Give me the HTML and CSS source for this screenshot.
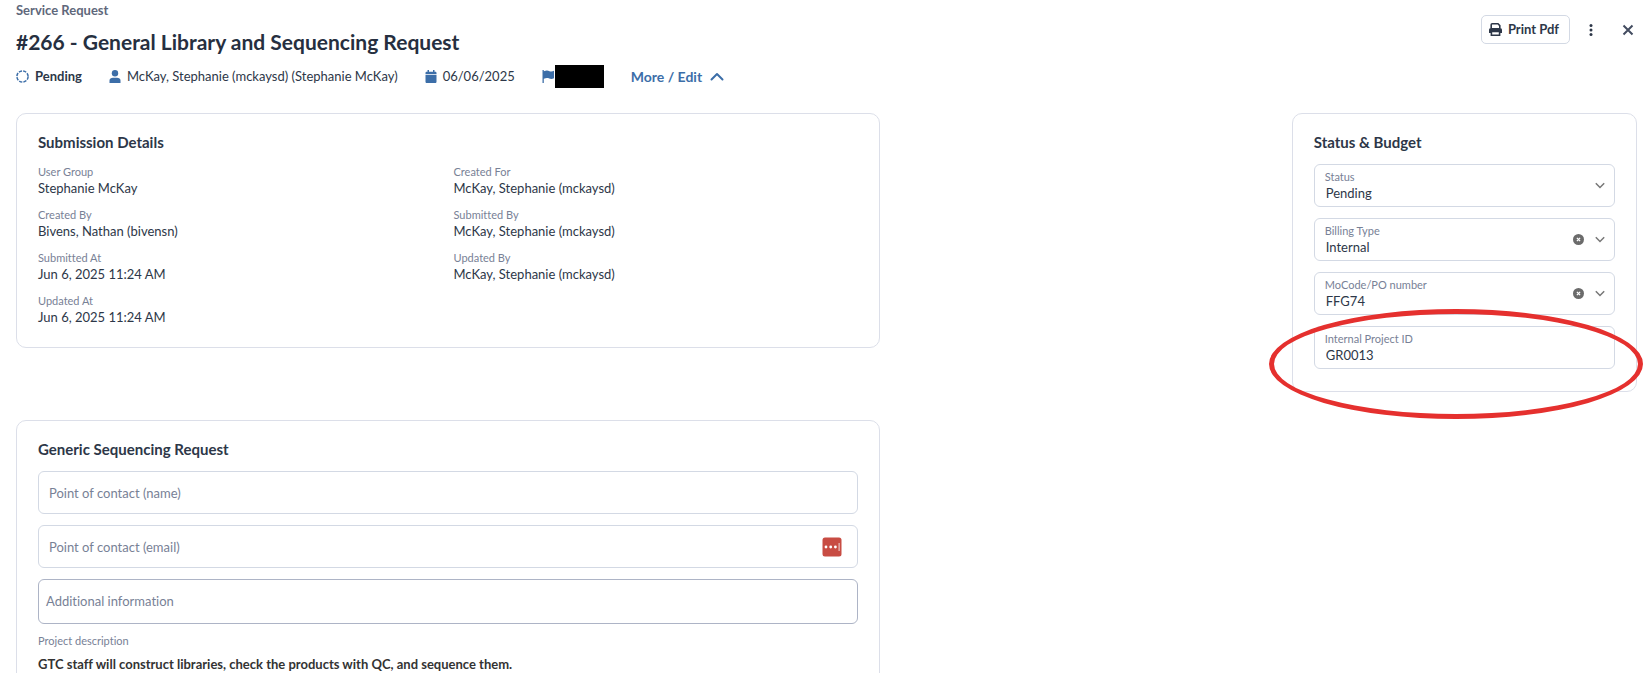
FILE: index.html
```html
<!DOCTYPE html>
<html lang="en">
<head>
<meta charset="utf-8">
<title>#266 - General Library and Sequencing Request</title>
<link rel="stylesheet" href="styles.css">
</head>
<body>
<header class="header">
  <div class="heading">
    <p class="eyebrow">Service Request</p>
    <h1 class="title">#266 - General Library and Sequencing Request</h1>
    <div class="meta">
      <span class="meta-item status"><svg class="icon" width="13" height="13" viewBox="0 0 13 13"><circle cx="6.5" cy="6.5" r="5.6" fill="none" stroke="currentColor" stroke-width="1.5" stroke-dasharray="3.2 1.2"/></svg>Pending</span>
      <span class="meta-item"><svg class="icon" width="12" height="13" viewBox="0 0 12 13"><circle cx="6" cy="3.3" r="3.2" fill="currentColor"/><path d="M.5 13v-2.200C.5 8.600 2 7.800 4 7.800h4c2 0 3.500.8 3.500 3V13z" fill="currentColor"/></svg>McKay, Stephanie (mckaysd) (Stephanie McKay)</span>
      <span class="meta-item"><svg class="icon" width="12" height="13" viewBox="0 0 12 13"><path d="M.5 4V3c0-.8.5-1.300 1.300-1.300H2.500V0H4v1.700h4V0h1.500v1.700h.7c.8 0 1.300.5 1.300 1.300v1zM.5 4.800h11v6.900c0 .8-.5 1.300-1.300 1.300H1.800c-.8 0-1.300-.5-1.300-1.300z" fill="currentColor"/></svg>06/06/2025</span>
      <span class="meta-item flag"><svg class="icon" width="13" height="13" viewBox="0 0 13 13"><path d="M.5 0h1.300v1.200c3-1 4.200-.6 5.700 0 1.600.6 3 .4 4.500-.4v7.400c-1.700.9-3.200 1-4.800.3-1.600-.6-3-.6-5.400.2V13H.5z" fill="currentColor"/></svg><span class="redacted"></span></span>
      <button class="more" type="button">More / Edit<svg width="14" height="9" viewBox="0 0 14 9"><path d="M1.500 7.500 7 2l5.500 5.500" fill="none" stroke="currentColor" stroke-width="2" stroke-linecap="round" stroke-linejoin="round"/></svg></button>
    </div>
  </div>
  <div class="actions">
    <button class="print" type="button"><svg width="13" height="13" viewBox="0 0 13 13"><path d="M2.200 5V1.800C2.200 1.200 2.600.8 3.200.8h5.800L10.800 2.600V5" fill="none" stroke="currentColor" stroke-width="1.600"/><path d="M2 5h9c1.200 0 2 .8 2 2v3h-2V8.500H2V10H0V7c0-1.200.8-2 2-2z" fill="currentColor"/><path d="M2.400 8.400h8.200v3.800H2.400z" fill="none" stroke="currentColor" stroke-width="1.600"/></svg>Print Pdf</button>
    <button class="icon-button" type="button" aria-label="More actions"><svg width="4" height="12" viewBox="0 0 4 12" fill="currentColor"><circle cx="2" cy="1.500" r="1.500"/><circle cx="2" cy="6" r="1.500"/><circle cx="2" cy="10.500" r="1.500"/></svg></button>
    <button class="icon-button close" type="button" aria-label="Close"><svg width="12" height="12" viewBox="0 0 12 12"><path d="m1.500 1.500 9 9m0-9-9 9" fill="none" stroke="currentColor" stroke-width="2"/></svg></button>
  </div>
</header>
<main class="layout">
  <div class="primary">
    <section class="card">
      <h2 class="card-title">Submission Details</h2>
      <dl class="details">
        <div><dt>User Group</dt><dd>Stephanie McKay</dd></div>
        <div><dt>Created For</dt><dd>McKay, Stephanie (mckaysd)</dd></div>
        <div><dt>Created By</dt><dd>Bivens, Nathan (bivensn)</dd></div>
        <div><dt>Submitted By</dt><dd>McKay, Stephanie (mckaysd)</dd></div>
        <div><dt>Submitted At</dt><dd>Jun 6, 2025 11:24 AM</dd></div>
        <div><dt>Updated By</dt><dd>McKay, Stephanie (mckaysd)</dd></div>
        <div><dt>Updated At</dt><dd>Jun 6, 2025 11:24 AM</dd></div>
      </dl>
    </section>
    <section class="card">
      <h2 class="card-title">Generic Sequencing Request</h2>
      <div class="fields">
        <div class="entry"><input class="entry-input" type="text" placeholder="Point of contact (name)" aria-label="Point of contact (name)"></div>
        <div class="entry"><input class="entry-input" type="email" placeholder="Point of contact (email)" aria-label="Point of contact (email)"><svg width="20" height="20" viewBox="0 0 20 20"><rect x=".5" y=".5" width="19" height="19" rx="2.500" fill="#c84c43"/><g fill="#fff"><circle cx="4" cy="10" r="1.400"/><circle cx="8.700" cy="10" r="1.400"/><circle cx="13.400" cy="10" r="1.400"/><path d="M16.600 6h1v8h-1z" opacity=".8"/></g></svg></div>
        <textarea class="notes" rows="1" placeholder="Additional information" aria-label="Additional information"></textarea>
      </div>
      <h3 class="caption">Project description</h3>
      <p class="description">GTC staff will construct libraries, check the products with QC, and sequence them.</p>
    </section>
  </div>
  <aside class="card budget">
    <h2 class="card-title">Status &amp; Budget</h2>
    <div class="fields">
      <div class="field">
        <div class="field-body"><label for="status">Status</label><select id="status"><option>Pending</option></select></div>
        <svg class="chevron" width="10" height="7" viewBox="0 0 10 7"><path d="m.8 1.200 4.200 4.300 4.200-4.300"/></svg>
      </div>
      <div class="field">
        <div class="field-body"><label for="billing">Billing Type</label><select id="billing"><option>Internal</option></select></div>
        <button class="clear" type="button" aria-label="Clear billing type"><svg width="11" height="11" viewBox="0 0 11 11"><circle cx="5.500" cy="5.500" r="5.500" fill="#6b6b6b"/><path d="m3.900 3.900 3.200 3.200m0-3.200L3.900 7.100" stroke="#fff" stroke-width="1.300"/></svg></button>
        <svg class="chevron" width="10" height="7" viewBox="0 0 10 7"><path d="m.8 1.200 4.200 4.300 4.200-4.300"/></svg>
      </div>
      <div class="field">
        <div class="field-body"><label for="mocode">MoCode/PO number</label><select id="mocode"><option>FFG74</option></select></div>
        <button class="clear" type="button" aria-label="Clear MoCode/PO number"><svg width="11" height="11" viewBox="0 0 11 11"><circle cx="5.500" cy="5.500" r="5.500" fill="#6b6b6b"/><path d="m3.900 3.900 3.200 3.200m0-3.200L3.900 7.100" stroke="#fff" stroke-width="1.300"/></svg></button>
        <svg class="chevron" width="10" height="7" viewBox="0 0 10 7"><path d="m.8 1.200 4.200 4.300 4.200-4.300"/></svg>
      </div>
      <div class="field">
        <div class="field-body"><label for="project">Internal Project ID</label><input id="project" type="text" value="GR0013"></div>
      </div>
    </div>
    <div class="highlight"></div>
  </aside>
</main>
</body>
</html>
```

FILE: styles.css
```css
* { box-sizing: border-box; }

body {
  height: 100vh;
  margin: 0;
  padding: 0 6px 0 16px;
  overflow: hidden;
  background: #fff;
  color: #2d3748;
  font: 13px/17px Lato, "Liberation Sans", sans-serif;
  font-variant-ligatures: none;
}

h1, h2, h3, p, dl, dd { margin: 0; }

button, input, select, textarea {
  margin: 0;
  padding: 0;
  border: 0;
  outline: 0;
  background: none;
  color: inherit;
  font: inherit;
  font-variant-ligatures: none;
}

svg { display: block; flex: none; }

.header {
  display: flex;
  justify-content: space-between;
  align-items: flex-start;
}

.eyebrow {
  padding-top: 2px;
  color: #5f687b;
  font-weight: 700;
}

.title {
  padding-top: 7px;
  font-size: 21px;
  line-height: 32px;
  font-weight: 700;
  color: #262f40;
}

.meta {
  display: flex;
  align-items: center;
  gap: 27px;
  height: 36px;
}

.meta-item {
  display: flex;
  align-items: center;
  gap: 6px;
}

.status { font-weight: 700; }
.flag { gap: 0; }
.icon, .more { color: #3c6ea8; }

.redacted {
  width: 49px;
  height: 23px;
  background: #000;
}

.more {
  display: flex;
  align-items: center;
  gap: 8px;
  font-size: 14px;
  font-weight: 700;
}

.actions {
  display: flex;
  align-items: center;
  gap: 18px;
  padding: 15px 2px 0 0;
}

.print {
  display: flex;
  align-items: center;
  gap: 6px;
  height: 29px;
  padding: 0 10px 0 7px;
  border: 1px solid #d3d9e4;
  border-radius: 5px;
  font-weight: 700;
}

.icon-button { padding: 0 1px; }
.close { padding: 0 1px 0 10px; color: #434c60; }

.layout {
  display: grid;
  grid-template-columns: 53.3% 21.3%;
  justify-content: space-between;
  align-items: start;
  padding-top: 19px;
}

.primary { display: grid; gap: 72px; }

.card {
  padding: 19px 21px 21px;
  border: 1px solid #dcdfe9;
  border-radius: 10px;
}

.card-title {
  margin-bottom: 13px;
  font-size: 15px;
  line-height: 18px;
  font-weight: 700;
}

.details {
  display: grid;
  grid-template-columns: 1fr 1fr;
  gap: 10px 11px;
}

dt, .field label, .caption {
  color: #788196;
  font-size: 11px;
  line-height: 16px;
  font-weight: 400;
}

.fields { display: grid; gap: 11px; }

.field, .entry {
  display: flex;
  align-items: center;
  height: 43px;
  border: 1px solid #d3d9e4;
  border-radius: 6px;
}

.field { gap: 11px; padding: 0 9px 0 10px; }

.field-body {
  display: flex;
  flex: 1;
  flex-direction: column;
  min-width: 0;
}

.field select, .field input {
  width: 100%;
  padding-left: 1px;
  appearance: none;
}

.chevron { fill: none; stroke: #777; stroke-width: 1.5; }

.entry { padding-right: 15px; }

.entry-input {
  flex: 1;
  height: 100%;
  padding-left: 10px;
}

.notes {
  display: block;
  width: 100%;
  height: 45px;
  padding: 13px 7px;
  border: 1px solid #adb4c6;
  border-radius: 6px;
  resize: none;
}

::placeholder { color: #788196; opacity: 1; }

.caption { margin-top: 9px; }

.description {
  margin: 7px 0 28px;
  color: #333;
  font-weight: 700;
}

.budget { position: relative; padding-bottom: 22px; }

/* Marker ring around the project ID */
.highlight {
  position: absolute;
  right: -7px;
  bottom: -28px;
  left: -24px;
  height: 110px;
  border: 5px solid #e5302e;
  border-radius: 50%;
  pointer-events: none;
}
```
